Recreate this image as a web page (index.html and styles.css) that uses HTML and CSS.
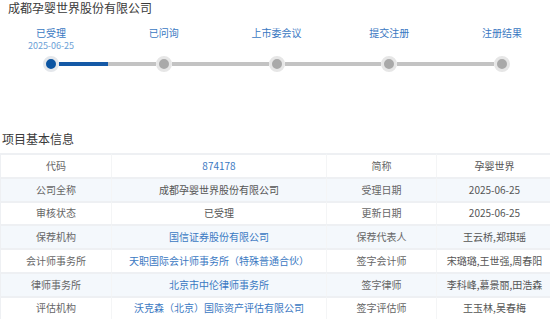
FILE: index.html
```html
<!DOCTYPE html>
<html lang="zh-CN">
<head>
<meta charset="utf-8">
<title>成都孕婴世界股份有限公司</title>
<link rel="stylesheet" href="styles.css">
</head>
<body>
<div class="page">
  <h1 class="title">成都孕婴世界股份有限公司</h1>
  <div class="steps">
    <div class="step"><div class="step-name">已受理</div><div class="step-date">2025-06-25</div></div>
    <div class="step"><div class="step-name">已问询</div></div>
    <div class="step"><div class="step-name">上市委会议</div></div>
    <div class="step"><div class="step-name">提交注册</div></div>
    <div class="step"><div class="step-name">注册结果</div></div>
  </div>
  <div class="track">
    <span class="dot dot-active"></span>
    <span class="seg seg-progress"></span>
    <span class="dot"></span>
    <span class="seg"></span>
    <span class="dot"></span>
    <span class="seg"></span>
    <span class="dot"></span>
    <span class="seg"></span>
    <span class="dot"></span>
  </div>
  <h2 class="heading">项目基本信息</h2>
  <div class="table-wrap">
    <table class="info">
      <colgroup><col class="c1"><col class="c2"><col class="c3"><col class="c4"></colgroup>
      <tr><td class="label">代码</td><td class="link">874178</td><td class="label">简称</td><td>孕婴世界</td></tr>
      <tr class="alt"><td class="label">公司全称</td><td>成都孕婴世界股份有限公司</td><td class="label">受理日期</td><td>2025-06-25</td></tr>
      <tr><td class="label">审核状态</td><td>已受理</td><td class="label">更新日期</td><td>2025-06-25</td></tr>
      <tr class="alt"><td class="label">保荐机构</td><td class="link">国信证券股份有限公司</td><td class="label">保荐代表人</td><td>王云桥,郑琪瑶</td></tr>
      <tr><td class="label">会计师事务所</td><td class="link">天职国际会计师事务所（特殊普通合伙）</td><td class="label">签字会计师</td><td>宋璐璐,王世强,周春阳</td></tr>
      <tr class="alt"><td class="label">律师事务所</td><td class="link">北京市中伦律师事务所</td><td class="label">签字律师</td><td>李科峰,慕景丽,田浩森</td></tr>
      <tr><td class="label">评估机构</td><td class="link">沃克森（北京）国际资产评估有限公司</td><td class="label">签字评估师</td><td>王玉林,吴春梅</td></tr>
    </table>
  </div>
</div>
</body>
</html>
```

FILE: styles.css
```css
html, body {
  margin: 0;
  padding: 0;
  background: #ffffff;
  overflow: hidden;
}
body {
  font-family: "Noto Sans CJK SC", "Noto Sans", sans-serif;
  color: #333333;
}
.page {
  width: 550px;
  height: 319px;
  overflow: hidden;
}
.title {
  margin: 0;
  padding-left: 8px;
  font-size: 12px;
  line-height: 16px;
  font-weight: normal;
  color: #3a3a3a;
}
.steps {
  margin-top: 11px;
  display: grid;
  grid-template-columns: repeat(5, 102px);
  column-gap: 10.75px;
  text-align: center;
}
.step-name {
  font-size: 10px;
  line-height: 12px;
  color: #3a78c2;
}
.step-date {
  margin-top: 1px;
  font-size: 9px;
  line-height: 11px;
  color: #6c9fd6;
}
.track {
  margin-top: 4.5px;
  display: flex;
  align-items: center;
  padding-left: 43px;
}
.dot {
  flex: none;
  box-sizing: border-box;
  width: 16px;
  height: 16px;
  border-radius: 50%;
  background: #a9a9a9;
  border: 3px solid #e6e6e6;
}
.dot-active {
  background: #0c55a2;
  border-color: #e4e7eb;
}
.seg {
  flex: none;
  width: 96.75px;
  height: 4px;
  background: #c3c3c3;
}
.seg-progress {
  background: linear-gradient(to right, #1559a6 0, #1559a6 49px, #c3c3c3 49px);
}
.heading {
  margin: 59px 0 0;
  padding-left: 2px;
  font-size: 12px;
  line-height: 16px;
  font-weight: normal;
  color: #3a3a3a;
}
.table-wrap {
  margin-top: 6.5px;
  width: 553px;
}
.info {
  width: 553px;
  table-layout: fixed;
  border-collapse: separate;
  border-spacing: 0;
  font-size: 10px;
  color: #555555;
}
.c1 { width: 112px; }
.c2 { width: 215px; }
.c3 { width: 110px; }
.c4 { width: 116px; }
.info tr {
  height: 23.78px;
}
.info td {
  padding: 0;
  text-align: center;
  vertical-align: middle;
  border-top: 2px solid #eef0f3;
  border-right: 1px solid #f4f5f6;
  line-height: 12px;
  white-space: nowrap;
  overflow: hidden;
}
.info td:first-child {
  border-left: 1px solid #eef0f3;
}
.info tr.alt td {
  background: #f4f8fc;
}
.info td.label {
  color: #666666;
}
.info td.link {
  color: #3a78c2;
}
```
